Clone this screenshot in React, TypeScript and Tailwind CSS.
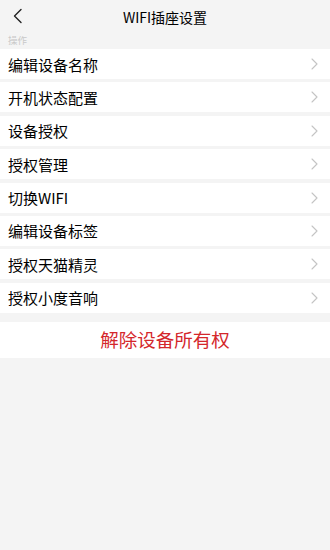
import React from "react";

const items = [
  "编辑设备名称",
  "开机状态配置",
  "设备授权",
  "授权管理",
  "切换WIFI",
  "编辑设备标签",
  "授权天猫精灵",
  "授权小度音响",
];

function Chevron() {
  return (
    <svg width="7" height="12" viewBox="0 0 7 12" fill="none">
      <path d="M1 1l5 5-5 5" stroke="#c4c4c4" strokeWidth="1.1" strokeLinecap="round" strokeLinejoin="round" />
    </svg>
  );
}

export default function App() {
  return (
    <div
      className="w-[330px] h-[550px] bg-[#f4f4f4] flex flex-col text-black"
      style={{ fontFamily: '"Noto Sans CJK SC", "Liberation Sans", sans-serif' }}
    >
      <div className="relative h-[33px] flex items-center justify-center shrink-0">
        <svg className="absolute left-[12px] top-[8px]" width="12" height="16" viewBox="0 0 12 16" fill="none">
          <path d="M9 1.5L2.5 8 9 14.5" stroke="#222" strokeWidth="1.4" strokeLinecap="round" strokeLinejoin="round" />
        </svg>
        <span className="text-[14px] leading-none mt-[1px]">WIFI插座设置</span>
      </div>
      <div className="h-[16px] pl-[8px] flex items-center text-[9.5px] leading-none text-[#c9c9c9] shrink-0">
        操作
      </div>
      <div className="flex flex-col gap-[3.4px]">
        {items.map((t) => (
          <div key={t} className="h-[30px] bg-white flex items-center justify-between pl-[8px] pr-[12px]">
            <span className="text-[15px] leading-none">{t}</span>
            <Chevron />
          </div>
        ))}
      </div>
      <div className="mt-[9px] h-[36px] bg-white flex items-center justify-center">
        <span className="text-[18.5px] leading-none text-[#d4272b]">解除设备所有权</span>
      </div>
    </div>
  );
}
